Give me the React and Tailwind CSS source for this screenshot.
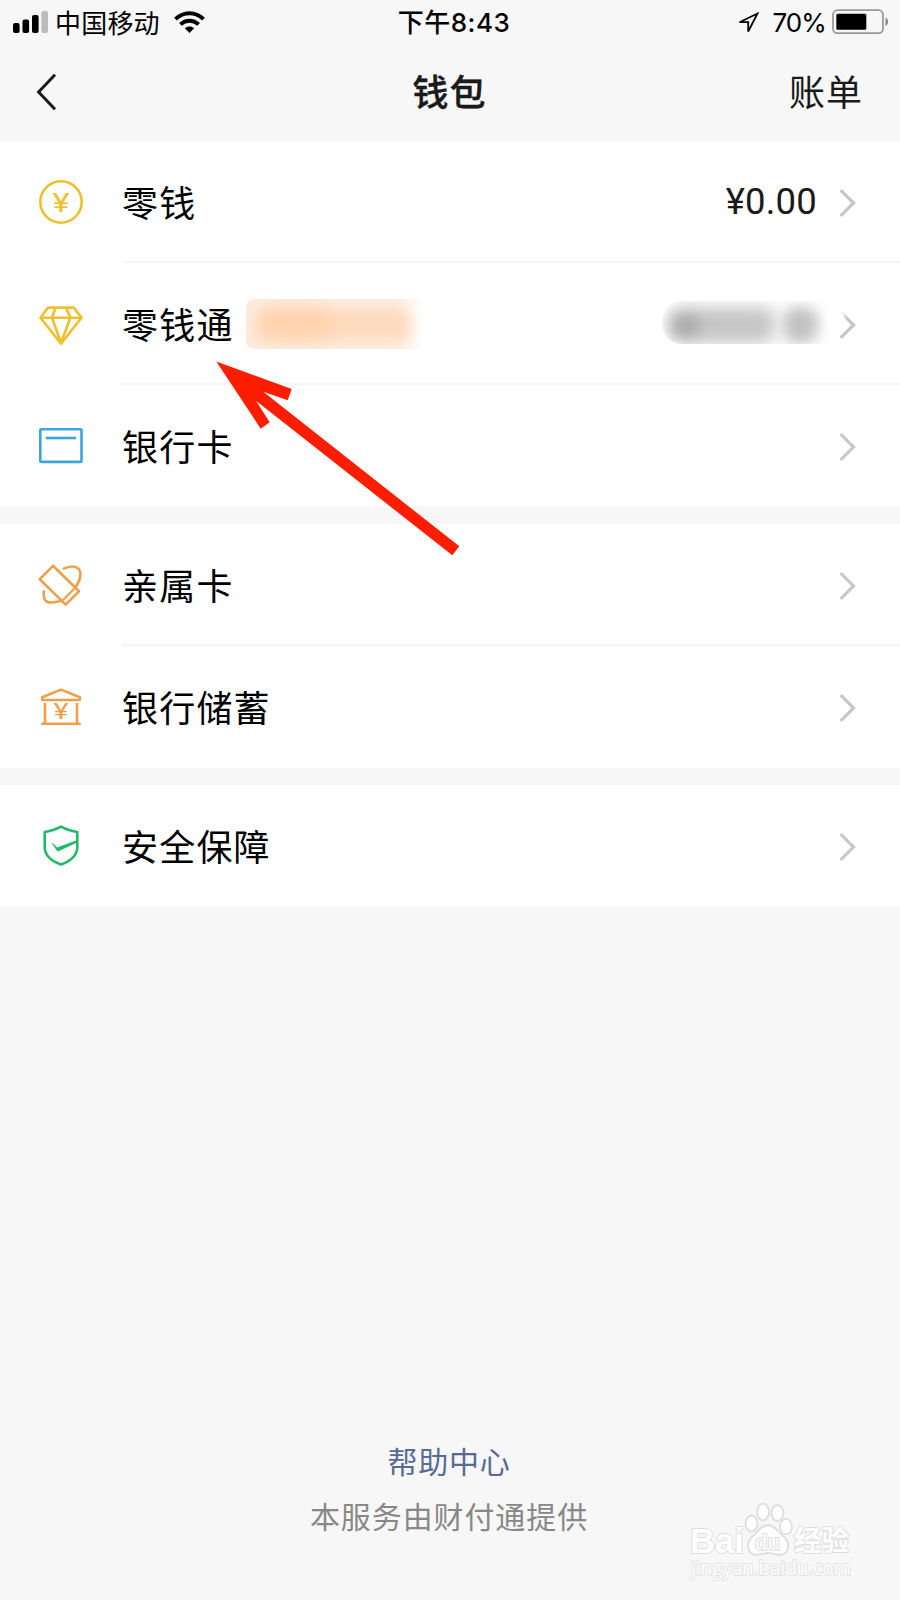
import React from "react";

const Chevron = () => (
  <svg className="mt-1 w-5 h-8 shrink-0" viewBox="0 0 20 32" fill="none">
    <path d="M2.6 3.2L15.6 16L2.6 28.8" stroke="#c7c7cc" strokeWidth="3.2" />
  </svg>
);

const Icon = ({ children, color }) => (
  <svg
    className="w-[50px] h-[50px] ml-9 shrink-0"
    viewBox="0 0 50 50"
    fill="none"
    stroke={color}
    strokeWidth="2.6"
    strokeLinejoin="round"
  >
    {children}
  </svg>
);

const Yuan = ({ y, size, width, color }) => (
  <text
    x={25 - width / 2}
    y={y}
    fontSize={size}
    textLength={width}
    lengthAdjust="spacingAndGlyphs"
    fill={color}
    stroke="none"
    className="font-['Roboto',sans-serif] font-normal"
  >
    ¥
  </text>
);

const CoinIcon = () => (
  <Icon color="#f0c02c">
    <circle cx="25" cy="25" r="20.7" />
    <Yuan y="34.5" size="25.5" width={17} color="#f0c02c" />
  </Icon>
);

const DiamondIcon = () => (
  <Icon color="#f0c02c">
    <path d="M12 8.6H37.8L45.5 18.7L25 44.6L4.5 18.7L12 8.6Z" />
    <path d="M4.5 18.7H45.5M19.5 8.6L16 18.7L25 44L34.3 18.7L30 8.6" />
  </Icon>
);

const BankCardIcon = () => (
  <Icon color="#3ba6dd">
    <rect x="4.3" y="8.3" width="41.2" height="32.6" rx="1" />
    <path d="M9.7 17H40" />
  </Icon>
);

const FamilyCardIcon = () => (
  <Icon color="#eda049">
    <path d="M17 5.8L3.8 19.2L29.6 44.6L43 31.3L17 5.8Z" />
    <path d="M26.2 40.8L39.2 27.8" strokeWidth="2" />
    <path d="M26.9 8.9C32 6.6 37.5 5.4 41.2 7.8C46.5 11.5 44.8 20.5 38.8 27.8" />
    <path d="M8 30.3C7.2 35.5 7.6 39.5 10.5 41.5C14 43.4 19.5 42.6 25.5 40.8" />
  </Icon>
);

const SavingsIcon = () => (
  <Icon color="#eda049">
    <path d="M6.2 18V15.2L25 7.6L43.8 15.2V18Z" />
    <path d="M9 21V41.5M41 21V41.5M5.2 41.7H44.7" />
    <Yuan y="37.2" size="21.5" width={15} color="#eda049" />
  </Icon>
);

const ShieldIcon = () => (
  <Icon color="#22b968">
    <path d="M25 5.6C20 8.4 14 10 8.7 11V26.5C8.7 34 15.5 40.5 25 43.6C34.5 40.5 41.3 34 41.3 26.5V11C36 10 30 8.4 25 5.6Z" />
    <path
      d="M16.3 22.5L21.3 26.8L41 19.5V21.2L21.7 30.2Z"
      fill="#22b968"
      strokeWidth="0.8"
    />
  </Icon>
);

const Row = ({ icon, label, divider, badge, children }) => (
  <div className="h-[122px] flex items-center bg-white">
    {icon}
    <div
      className={`ml-9 h-full flex-1 flex items-center pr-[42px] border-b-2 ${
        divider ? "border-[#f5f5f5]" : "border-transparent"
      }`}
    >
      <span className="pb-px text-[36px] tracking-[1.2px] leading-none text-black">
        {label}
      </span>
      {badge}
      <div className="ml-auto flex items-center">
        {children}
        <Chevron />
      </div>
    </div>
  </div>
);

const RateBadge = () => (
  <div className="relative mt-px ml-3 w-[178px] h-[50px] rounded-lg overflow-hidden bg-linear-to-r from-[#fdebdd] from-85% to-white">
    <div className="absolute left-2.5 top-[11px] w-[154px] h-[29px] rounded-xl bg-[#fedabd] blur-[6px]" />
    <div className="absolute left-4 top-3 w-[68px] h-[26px] rounded-full bg-[#fed2aa] blur-[9px]" />
  </div>
);

// balance is smudged out, the smudge also covers the top of the chevron
const HiddenAmount = () => (
  <div className="relative mb-0.5 w-[176px] h-[43px]">
    <div className="w-full h-full relative rounded-l-[20px] overflow-hidden">
      <div className="absolute left-[7px] top-1.5 w-[106px] h-[36px] rounded-xl bg-[#c6c6c6] blur-[8px]" />
      <div className="absolute left-2.5 top-[15px] w-7 h-5 rounded-full bg-[#aaa] blur-[7px]" />
      <div className="absolute left-[121px] top-1.5 w-[35px] h-[36px] rounded-xl bg-[#c2c2c2] blur-[7px]" />
    </div>
    <div className="absolute left-[164px] top-1.5 w-[19px] h-6 rounded-full bg-white/90 blur-[1px]" />
  </div>
);

const StatusBar = () => (
  <div className="h-11 flex items-center text-black text-[26px] leading-none">
    <div className="flex-1 flex items-center pl-[13px]">
      <svg className="w-[35px] h-[22px]" viewBox="0 0 35 22">
        <rect x="0" y="12" width="6.6" height="10" rx="2" />
        <rect x="9.5" y="8.5" width="6.6" height="13.5" rx="2" />
        <rect x="19" y="4" width="6.6" height="18" rx="2" />
        <rect x="28.3" y="0" width="6.7" height="22" rx="2" fill="#bbb" />
      </svg>
      <span className="ml-[7px] tracking-[0.2px]">中国移动</span>
      <svg
        className="ml-3.5 w-[31px] h-[22px]"
        viewBox="0 0 31 22"
        fill="none"
        stroke="#000"
        strokeWidth="4"
      >
        <path d="M1.5 8.2C9.5 0.2 21.5 0.2 29.5 8.2" />
        <path d="M6.4 13.4C11.8 8.4 19.2 8.4 24.6 13.4" />
        <path
          d="M10.8 17.2C13.6 14.8 17.4 14.8 20.2 17.2L15.5 22Z"
          fill="#000"
          stroke="none"
        />
      </svg>
    </div>
    <span className="pt-0.5 pl-1.5 font-medium tracking-[0.5px] font-['Inter','Noto_Sans_CJK_SC',sans-serif]">
      下午8:43
    </span>
    <div className="flex-1 flex items-center justify-end pr-[11px]">
      <svg className="mt-0.5 w-[22px] h-[22px]" viewBox="0 0 22 22" fill="none">
        <path
          d="M20.5 1.5L2.5 10.2H11.2V19.5L20.5 1.5Z"
          stroke="#000"
          strokeWidth="1.8"
        />
      </svg>
      <span className="mt-0.5 ml-[13px] mr-[6px] font-['Inter',sans-serif] tracking-[-0.9px]">
        70%
      </span>
      <svg className="w-[57px] h-[26px]" viewBox="0 0 57 26">
        <rect
          x="1"
          y="1.2"
          width="50"
          height="23"
          rx="4.5"
          fill="none"
          stroke="#999"
          strokeWidth="1.8"
        />
        <rect x="4.3" y="4.7" width="30" height="16" rx="1.5" />
        <path d="M53.5 8.5C57 10 57 15.5 53.5 17Z" fill="#888" />
      </svg>
    </div>
  </div>
);

const NavBar = () => (
  <div className="h-[97px] pb-[5px] flex items-center text-[#1a1a1a] text-[36px] leading-none">
    <div className="flex-1 flex pl-9">
      <svg className="mt-1 w-6 h-10" viewBox="0 0 24 40" fill="none">
        <path d="M19 2.8L2.6 20L19 37.2" stroke="#1a1a1a" strokeWidth="3" />
      </svg>
    </div>
    <span className="font-medium tracking-[1px] [-webkit-text-stroke:0.4px_#1a1a1a]">
      钱包
    </span>
    <div className="flex-1 flex justify-end pr-[37px]">
      <span className="tracking-[1px]">账单</span>
    </div>
  </div>
);

const Pointer = () => (
  <svg
    className="absolute left-[210px] top-[355px] w-[260px] h-[210px]"
    viewBox="210 355 260 210"
  >
    <path
      d="M216.3 361.5L291.7 389L287.7 400.3L263.3 391.8L459.3 546.3L452.3 555.3L256 400.8L269.7 422.3L260.7 428.7Z"
      fill="#ff1d00"
    />
  </svg>
);

const Watermark = () => (
  <svg
    className="absolute left-[680px] top-[1495px] w-[190px] h-[95px]"
    viewBox="680 1495 190 95"
    fill="#fff"
    stroke="#dedede"
    strokeWidth="1.8"
  >
    <g className="font-['Noto_Sans_CJK_SC',sans-serif] font-bold [paint-order:stroke]">
      <text
        x="690"
        y="1553"
        fontSize="35"
        textLength="54"
        lengthAdjust="spacingAndGlyphs"
        className="font-['Liberation_Sans',sans-serif]"
      >
        Bai
      </text>
      <text x="794" y="1551" fontSize="28" textLength="55" lengthAdjust="spacingAndGlyphs">
        经验
      </text>
    </g>
    <ellipse cx="751.5" cy="1523.5" rx="6" ry="8" />
    <ellipse cx="763" cy="1512" rx="6" ry="8.3" />
    <ellipse cx="777.5" cy="1513" rx="6" ry="8" />
    <ellipse cx="786" cy="1526.5" rx="6" ry="7.7" />
    <path d="M768 1525C775 1525 778 1532 784 1537C791 1543 789 1554 780 1555C775 1555 772 1553 768 1553C764 1553 761 1555 756 1555C747 1554 746 1543 752 1537C758 1532 761 1525 768 1525Z" />
    <text
      x="755"
      y="1550"
      fontSize="22"
      textLength="25"
      lengthAdjust="spacingAndGlyphs"
      fill="#f7f7f7"
      className="font-['Liberation_Sans',sans-serif] font-bold [paint-order:stroke]"
    >
      du
    </text>
    <text
      x="691"
      y="1575"
      fontSize="20"
      textLength="160"
      lengthAdjust="spacingAndGlyphs"
      stroke="#e2e2e2"
      className="font-['Open_Sans',sans-serif] [paint-order:stroke]"
    >
      jingyan.baidu.com
    </text>
  </svg>
);

const App = () => {
  return (
    <div className="relative w-[900px] h-[1600px] overflow-hidden flex flex-col bg-[#f7f7f7] font-['Noto_Sans_CJK_SC',sans-serif]">
      <StatusBar />
      <NavBar />
      <div className="flex flex-col gap-[17px]">
        <div>
          <Row icon={<CoinIcon />} label="零钱" divider>
            <span className="mt-0.5 mr-[21px] font-['Roboto',sans-serif] text-[36.5px] tracking-[0.2px] leading-none text-[#1a1a1a]">
              ¥0.00
            </span>
          </Row>
          <Row
            icon={<DiamondIcon />}
            label="零钱通"
            divider
            badge={<RateBadge />}
          >
            <HiddenAmount />
          </Row>
          <Row icon={<BankCardIcon />} label="银行卡" />
        </div>
        <div>
          <Row icon={<FamilyCardIcon />} label="亲属卡" divider />
          <Row icon={<SavingsIcon />} label="银行储蓄" />
        </div>
        <div>
          <Row icon={<ShieldIcon />} label="安全保障" />
        </div>
      </div>
      <div className="mt-auto pb-[70px] pr-0.5 flex flex-col items-center gap-[25px] text-[30px] leading-[30px]">
        <span className="text-[#576b95] tracking-[0.7px]">帮助中心</span>
        <span className="text-[#888] tracking-[0.9px]">
          本服务由财付通提供
        </span>
      </div>
      <Pointer />
      <Watermark />
    </div>
  );
};

export default App;
